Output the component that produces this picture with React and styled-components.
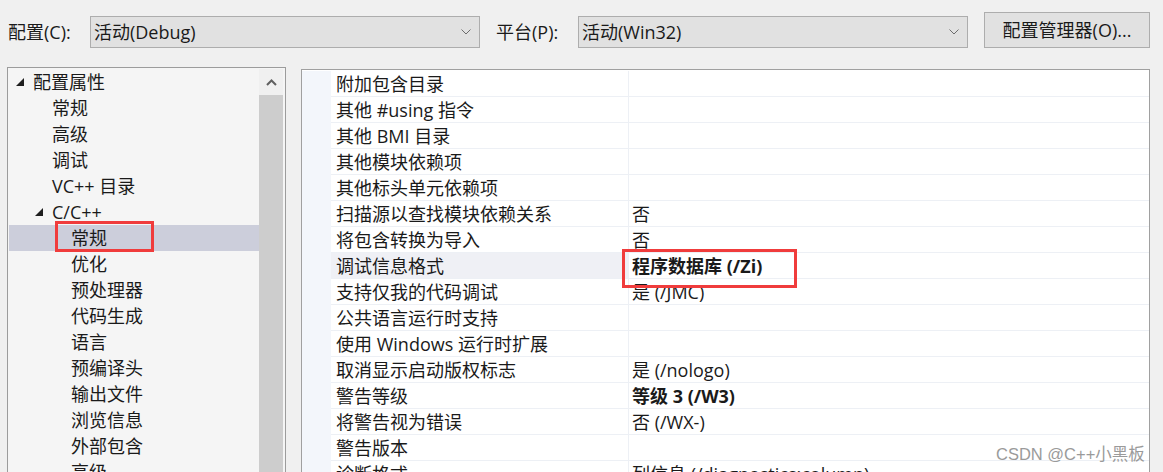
import React from 'react';
import styled, { createGlobalStyle } from 'styled-components';

const GlobalStyle = createGlobalStyle`
  html, body {
    margin: 0;
    padding: 0;
    background: #f0f0f0;
    overflow: hidden;
  }
  body {
    font-family: "Open Sans", "Noto Sans CJK SC", sans-serif;
    font-size: 18px;
    line-height: 20px;
    color: #1a1a1a;
  }
`;

const Page = styled.div`
  position: relative;
  width: 1163px;
  height: 472px;
  overflow: hidden;
  background: #f0f0f0;
`;

const TopBar = styled.div`
  display: flex;
  align-items: center;
  height: 36px;
  margin-top: 12px;
  padding-left: 8px;
`;

const Label = styled.div`
  width: 82px;
  flex-shrink: 0;
  margin-top: 3px;
  white-space: nowrap;
`;

const Combo = styled.div`
  box-sizing: border-box;
  width: 390px;
  height: 32px;
  align-self: flex-end;
  display: flex;
  align-items: center;
  justify-content: space-between;
  padding: 0 8px 0 3px;
  background: #e1e1e1;
  border: 1px solid #adadad;
  margin-right: 16px;
  white-space: nowrap;
`;

const Button = styled.div`
  box-sizing: border-box;
  width: 166px;
  height: 36px;
  display: flex;
  align-items: center;
  justify-content: center;
  background: #e1e1e1;
  border: 1px solid #adadad;
  white-space: nowrap;
`;

const Main = styled.div`
  display: flex;
  align-items: flex-start;
  gap: 15px;
  margin-top: 19px;
  padding-left: 7px;
`;

const TreePanel = styled.div`
  box-sizing: border-box;
  width: 279px;
  height: 440px;
  display: flex;
  padding: 1px 2px 1px 1px;
  background: #f5f5f5;
  border: 1px solid #9c9c9c;
`;

const TreeList = styled.div`
  flex: 1;
`;

const TreeRow = styled.div`
  position: relative;
  display: flex;
  align-items: center;
  height: 26px;
  padding-left: ${p => 6 + p.$level * 19}px;
  box-sizing: border-box;
  background: ${p => (p.$selected ? '#cccedb' : 'transparent')};
  white-space: nowrap;
`;

const Expander = styled.span`
  display: flex;
  align-items: center;
  width: 18px;
  height: 26px;
  flex-shrink: 0;
  padding-left: 1px;
  box-sizing: border-box;
`;

const TreeMark = styled.div`
  position: absolute;
  left: 46px;
  top: -4px;
  width: 99px;
  height: 31px;
  box-sizing: border-box;
  border: 3px solid #f03c3c;
`;

const ScrollBar = styled.div`
  width: 24px;
  display: flex;
  flex-direction: column;
`;

const ScrollButton = styled.div`
  height: 26px;
  display: flex;
  align-items: center;
  justify-content: center;
  background: #f0f0f0;
`;

const ScrollThumb = styled.div`
  flex: 1;
  background: #cdcdcd;
`;

const Grid = styled.div`
  box-sizing: border-box;
  width: 849px;
  height: 440px;
  margin-top: 2px;
  padding-top: 1px;
  background: #ffffff;
  border: 1px solid #a0a0a0;
  overflow: hidden;
`;

const GridRow = styled.div`
  display: grid;
  grid-template-columns: 29px 298px 1fr;
  grid-template-rows: 26px;
  height: 26px;
`;

const Strip = styled.div`
  background: #f3f6fb;
`;

const NameCell = styled.div`
  box-sizing: border-box;
  height: 26px;
  display: flex;
  align-items: center;
  padding: 1px 0 0 5px;
  border-bottom: 1px solid #edf0f5;
  border-right: 1px solid #edf0f5;
  background: ${p => (p.$selected ? '#eff0f5' : '#ffffff')};
  white-space: nowrap;
  overflow: hidden;
`;

const ValueCell = styled.div`
  box-sizing: border-box;
  height: 26px;
  position: relative;
  display: flex;
  align-items: center;
  padding: 1px 0 0 3px;
  border-bottom: 1px solid #edf0f5;
  font-weight: ${p => (p.$bold ? 700 : 400)};
  white-space: nowrap;
`;

const ValueMark = styled.div`
  position: absolute;
  left: -7px;
  top: -4px;
  width: 175px;
  height: 39px;
  box-sizing: border-box;
  border: 3px solid #f03c3c;
  z-index: 2;
`;

const Watermark = styled.div`
  position: absolute;
  left: 996px;
  top: 443px;
  font-family: "Liberation Sans", "Noto Sans CJK SC", sans-serif;
  font-size: 16.5px;
  line-height: 22px;
  color: #9a9a9a;
  white-space: nowrap;
`;

const ChevronDown = () => (
  <svg width="10" height="6" viewBox="0 0 10 6">
    <polyline points="0.5,0.5 5,5 9.5,0.5" fill="none" stroke="#6d6d6d" strokeWidth="1" />
  </svg>
);

const ChevronUp = () => (
  <svg width="11" height="7" viewBox="0 0 11 7">
    <polyline points="1,6 5.5,1.5 10,6" fill="none" stroke="#606060" strokeWidth="2" />
  </svg>
);

const Triangle = () => (
  <svg width="8" height="8" viewBox="0 0 8 8">
    <polygon points="8,0 8,8 0,8" fill="#1e1e1e" />
  </svg>
);

const treeItems = [
  { label: '配置属性', level: 0, expanded: true },
  { label: '常规', level: 1 },
  { label: '高级', level: 1 },
  { label: '调试', level: 1 },
  { label: 'VC++ 目录', level: 1 },
  { label: 'C/C++', level: 1, expanded: true },
  { label: '常规', level: 2, selected: true, marked: true },
  { label: '优化', level: 2 },
  { label: '预处理器', level: 2 },
  { label: '代码生成', level: 2 },
  { label: '语言', level: 2 },
  { label: '预编译头', level: 2 },
  { label: '输出文件', level: 2 },
  { label: '浏览信息', level: 2 },
  { label: '外部包含', level: 2 },
  { label: '高级', level: 2 },
];

const props = [
  { name: '附加包含目录', value: '' },
  { name: '其他 #using 指令', value: '' },
  { name: '其他 BMI 目录', value: '' },
  { name: '其他模块依赖项', value: '' },
  { name: '其他标头单元依赖项', value: '' },
  { name: '扫描源以查找模块依赖关系', value: '否' },
  { name: '将包含转换为导入', value: '否' },
  { name: '调试信息格式', value: '程序数据库 (/Zi)', bold: true, selected: true, marked: true },
  { name: '支持仅我的代码调试', value: '是 (/JMC)' },
  { name: '公共语言运行时支持', value: '' },
  { name: '使用 Windows 运行时扩展', value: '' },
  { name: '取消显示启动版权标志', value: '是 (/nologo)' },
  { name: '警告等级', value: '等级 3 (/W3)', bold: true },
  { name: '将警告视为错误', value: '否 (/WX-)' },
  { name: '警告版本', value: '' },
  { name: '诊断格式', value: '列信息 (/diagnostics:column)' },
];

export default function App() {
  return (
    <Page>
      <GlobalStyle />
      <TopBar>
        <Label>配置(C):</Label>
        <Combo>
          <span>活动(Debug)</span>
          <ChevronDown />
        </Combo>
        <Label>平台(P):</Label>
        <Combo>
          <span>活动(Win32)</span>
          <ChevronDown />
        </Combo>
        <Button>配置管理器(O)...</Button>
      </TopBar>

      <Main>
        <TreePanel>
          <TreeList>
            {treeItems.map((item, i) => (
              <TreeRow key={i} $level={item.level} $selected={item.selected}>
                <Expander>{item.expanded && <Triangle />}</Expander>
                {item.label}
                {item.marked && <TreeMark />}
              </TreeRow>
            ))}
          </TreeList>
          <ScrollBar>
            <ScrollButton>
              <ChevronUp />
            </ScrollButton>
            <ScrollThumb />
          </ScrollBar>
        </TreePanel>

        <Grid>
          {props.map((p, i) => (
            <GridRow key={i}>
              <Strip />
              <NameCell $selected={p.selected}>{p.name}</NameCell>
              <ValueCell $bold={p.bold}>
                {p.value}
                {p.marked && <ValueMark />}
              </ValueCell>
            </GridRow>
          ))}
        </Grid>
      </Main>

      <Watermark>CSDN @C++小黑板</Watermark>
    </Page>
  );
}
